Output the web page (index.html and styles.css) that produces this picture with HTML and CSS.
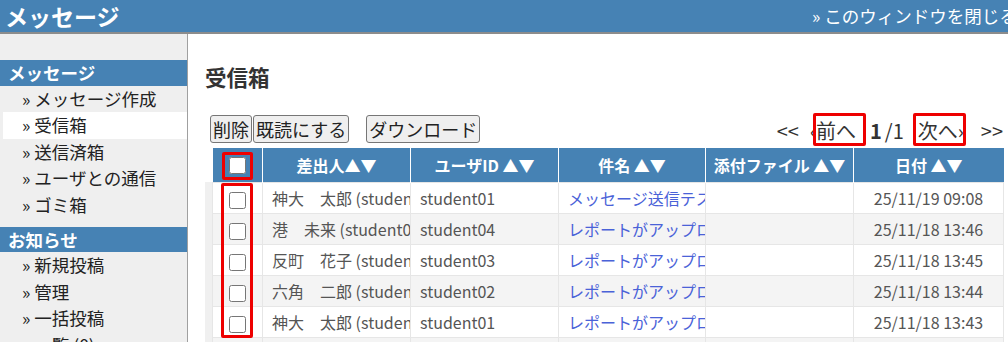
FILE: index.html
```html
<!DOCTYPE html>
<html lang="ja">
<head>
<meta charset="utf-8">
<title>メッセージ</title>
<link rel="stylesheet" href="styles.css">
</head>
<body>
<header class="topbar">
  <div class="app-title">メッセージ</div>
  <a class="close-link" href="#">» このウィンドウを閉じる</a>
</header>
<div class="layout">
  <nav class="sidebar">
    <div class="nav-section">
      <div class="nav-head">メッセージ</div>
      <ul class="nav-list">
        <li><a href="#">» メッセージ作成</a></li>
        <li class="current"><a href="#">» 受信箱</a></li>
        <li><a href="#">» 送信済箱</a></li>
        <li><a href="#">» ユーザとの通信</a></li>
        <li><a href="#">» ゴミ箱</a></li>
      </ul>
    </div>
    <div class="nav-section">
      <div class="nav-head">お知らせ</div>
      <ul class="nav-list">
        <li><a href="#">» 新規投稿</a></li>
        <li><a href="#">» 管理</a></li>
        <li><a href="#">» 一括投稿</a></li>
        <li><a href="#">» 一覧 (0)</a></li>
      </ul>
    </div>
  </nav>
  <main class="main">
    <h2 class="page-title">受信箱</h2>
    <div class="toolbar">
      <div class="actions">
        <button class="btn">削除</button><button class="btn">既読にする</button><button class="btn btn-spaced">ダウンロード</button>
      </div>
      <div class="pager">
        <span class="pg-first">&lt;&lt;</span>
        <span class="pg-prev">‹<span class="pg-mark pg-mark-prev">前へ</span></span>
        <b class="pg-cur">1</b>
        <span class="pg-total">/1</span>
        <span class="pg-next"><span class="pg-mark pg-mark-next">次へ</span>›</span>
        <span class="pg-last">&gt;&gt;</span>
      </div>
    </div>
    <div class="table-wrap">
      <table class="inbox">
        <colgroup>
          <col class="c-check"><col class="c-from"><col class="c-user"><col class="c-subject"><col class="c-file"><col class="c-date">
        </colgroup>
        <thead>
          <tr>
            <th><span class="mark-head"><input type="checkbox" class="cb"></span></th>
            <th>差出人▲▼</th>
            <th>ユーザID ▲▼</th>
            <th>件名 ▲▼</th>
            <th>添付ファイル ▲▼</th>
            <th>日付 ▲▼</th>
          </tr>
        </thead>
        <tbody>
          <tr>
            <td class="t-check"><input type="checkbox" class="cb"></td>
            <td>神大　太郎 (student01)</td>
            <td>student01</td>
            <td><a href="#" class="subject">メッセージ送信テスト</a></td>
            <td></td>
            <td class="t-date">25/11/19 09:08</td>
          </tr>
          <tr>
            <td class="t-check"><input type="checkbox" class="cb"></td>
            <td>港　未来 (student04)</td>
            <td>student04</td>
            <td><a href="#" class="subject">レポートがアップロードされました</a></td>
            <td></td>
            <td class="t-date">25/11/18 13:46</td>
          </tr>
          <tr>
            <td class="t-check"><input type="checkbox" class="cb"></td>
            <td>反町　花子 (student03)</td>
            <td>student03</td>
            <td><a href="#" class="subject">レポートがアップロードされました</a></td>
            <td></td>
            <td class="t-date">25/11/18 13:45</td>
          </tr>
          <tr>
            <td class="t-check"><input type="checkbox" class="cb"></td>
            <td>六角　二郎 (student02)</td>
            <td>student02</td>
            <td><a href="#" class="subject">レポートがアップロードされました</a></td>
            <td></td>
            <td class="t-date">25/11/18 13:44</td>
          </tr>
          <tr>
            <td class="t-check"><input type="checkbox" class="cb"></td>
            <td>神大　太郎 (student01)</td>
            <td>student01</td>
            <td><a href="#" class="subject">レポートがアップロードされました</a></td>
            <td></td>
            <td class="t-date">25/11/18 13:43</td>
          </tr>
          <tr>
            <td class="t-check"></td>
            <td></td>
            <td></td>
            <td></td>
            <td></td>
            <td class="t-date"></td>
          </tr>
        </tbody>
      </table>
      <div class="mark-rows"></div>
    </div>
  </main>
</div>
</body>
</html>
```

FILE: styles.css
```css
html, body {
  margin: 0;
  padding: 0;
}

body {
  font-family: "Noto Sans CJK JP", "Noto Sans", sans-serif;
  color: #222;
  background: #fff;
  overflow: hidden;
}

/* top bar */
.topbar {
  height: 32px;
  background: #4682b4;
  border-bottom: 2px solid #8c8c8c;
  display: flex;
  align-items: center;
  overflow: hidden;
  white-space: nowrap;
}

.app-title {
  padding-left: 5px;
  font-size: 23px;
  font-weight: bold;
  color: #fff;
  line-height: 32px;
}

.close-link {
  margin-left: auto;
  width: 196px;
  flex-shrink: 0;
  color: #fff;
  font-size: 17.5px;
  line-height: 32px;
  text-decoration: none;
}

/* layout */
.layout {
  display: flex;
  height: calc(100vh - 34px);
}

.sidebar {
  width: 187px;
  flex-shrink: 0;
  background: #efefef;
  border-right: 1px solid #a0a0a0;
  padding-top: 26px;
}

.nav-section + .nav-section {
  margin-top: 8.5px;
}

.nav-head {
  height: 25.5px;
  line-height: 25.5px;
  background: #4682b4;
  color: #fff;
  font-weight: bold;
  font-size: 17.5px;
  padding-left: 8px;
}

.nav-list {
  list-style: none;
  margin: 0;
  padding: 0;
}

.nav-list li {
  margin-left: 3px;
  height: 26.5px;
  line-height: 26.5px;
  padding-left: 19px;
  font-size: 17.5px;
  white-space: nowrap;
}

.nav-list li.current {
  background: #fff;
}

.nav-list a {
  color: #222;
  text-decoration: none;
}

/* main */
.main {
  flex: 1;
  min-width: 0;
  padding: 0 5px 0 17px;
}

.page-title {
  margin: 28px 0 0;
  font-size: 21.5px;
  line-height: 30px;
  font-weight: bold;
  color: #333;
}

.toolbar {
  display: flex;
  justify-content: space-between;
  align-items: flex-start;
  height: 28px;
  margin-top: 23px;
}

.actions {
  display: flex;
  padding-left: 5px;
}

.btn {
  font-family: inherit;
  font-size: 18px;
  height: 28px;
  line-height: 26px;
  padding: 0 2px;
  border: 1px solid #767676;
  border-radius: 3px;
  background: #efefef;
  color: #222;
}

.btn + .btn {
  margin-left: 1px;
}

.btn.btn-spaced {
  margin-left: 17px;
}

.pager {
  display: flex;
  font-size: 20px;
  line-height: 28px;
  padding-top: 2px;
  color: #333;
  white-space: nowrap;
}

.pg-prev { margin-left: 11px; }
.pg-cur { margin-left: 14px; }
.pg-total { margin-left: 3px; }
.pg-next { margin-left: 14px; }
.pg-last { margin-left: 17px; }

.pg-mark {
  position: relative;
}

.pg-mark::after {
  content: "";
  position: absolute;
  top: -3px;
  bottom: -1px;
  border: 3px solid #ee0000;
  border-radius: 2px;
}

.pg-mark-prev::after {
  left: -3px;
  right: -10px;
}

.pg-mark-next::after {
  left: -5px;
  right: -8px;
}

/* table */
.table-wrap {
  position: relative;
  margin-top: 5px;
  padding-left: 7px;
  background: linear-gradient(#fff 34px, #f0f0f0 34px);
}

.inbox {
  width: 791px;
  table-layout: fixed;
  border-collapse: collapse;
  background: #fff;
}

.c-check { width: 50px; }
.c-from { width: 148px; }
.c-user { width: 148px; }
.c-subject { width: 147px; }
.c-file { width: 148px; }
.c-date { width: 150px; }

.inbox th {
  background: #4682b4;
  color: #fff;
  font-size: 16px;
  font-weight: bold;
  height: 34px;
  padding: 0;
  border-left: 1px solid #fff;
  border-right: 1px solid #fff;
  white-space: nowrap;
  overflow: hidden;
}

.inbox th:first-child {
  border-left: none;
}

.inbox th:last-child {
  border-right: none;
}

.inbox td {
  height: 30px;
  padding: 0 9px;
  font-size: 16px;
  color: #555;
  white-space: nowrap;
  overflow: hidden;
  border: 1px solid #e6e6e6;
}

.inbox tbody tr:nth-child(even) td {
  background: #f4f4f4;
}

.inbox td.t-check {
  text-align: center;
  padding: 0;
}

.inbox td.t-date {
  text-align: center;
}

.subject {
  color: #4a62d8;
  text-decoration: none;
}

.cb {
  width: 17px;
  height: 17px;
  margin: 0;
  vertical-align: middle;
}

.mark-head {
  display: inline-block;
  line-height: 0;
  padding: 2px 4px 3px;
  border: 3px solid #ee0000;
  border-radius: 2px;
}

.mark-rows {
  position: absolute;
  left: 16px;
  top: 35px;
  width: 26px;
  height: 149px;
  border: 3px solid #ee0000;
  border-radius: 2px;
}
```
